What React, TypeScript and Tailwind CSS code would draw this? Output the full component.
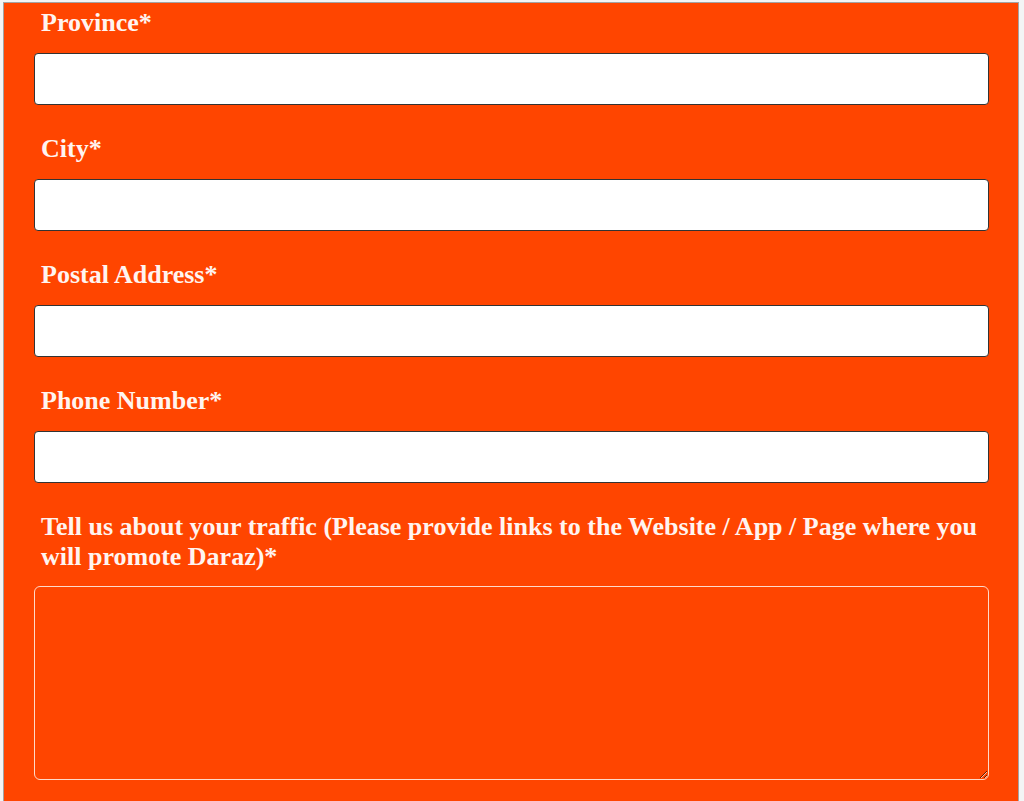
import React from 'react';

const fields = ['Province*', 'City*', 'Postal Address*', 'Phone Number*'];

const App: React.FC = () => {
  return (
    <div className="min-h-screen bg-[#f3f4f5] pl-[3px] pr-[5px] pt-[2px]" style={{ fontFamily: '"Liberation Serif", "Times New Roman", serif' }}>
      <div className="min-h-[799px] bg-[#ff4500] border border-b-0 border-[#a3a3a3] pl-[30px] pr-[29px] pt-[5px]">
        {fields.map(f => (
          <div key={f} className="mb-[29px]">
            <label className="block pl-[7px] mb-[15px] text-[26px] leading-[30px] font-bold text-[#fff4f0]">{f}</label>
            <input
              type="text"
              className="block w-full h-[52px] bg-white border border-[#333] rounded-[4px] outline-none"
            />
          </div>
        ))}
        <div>
          <label className="block pl-[7px] pr-[2px] mb-[14px] text-[26px] leading-[30px] font-bold text-[#fff4f0]">
            Tell us about your traffic (Please provide links to the Website / App / Page where you will promote Daraz)*
          </label>
          <textarea className="block w-full h-[194px] bg-transparent border border-[#ffd9c9] rounded-[6px] outline-none" />
        </div>
      </div>
    </div>
  );
};

export default App;
